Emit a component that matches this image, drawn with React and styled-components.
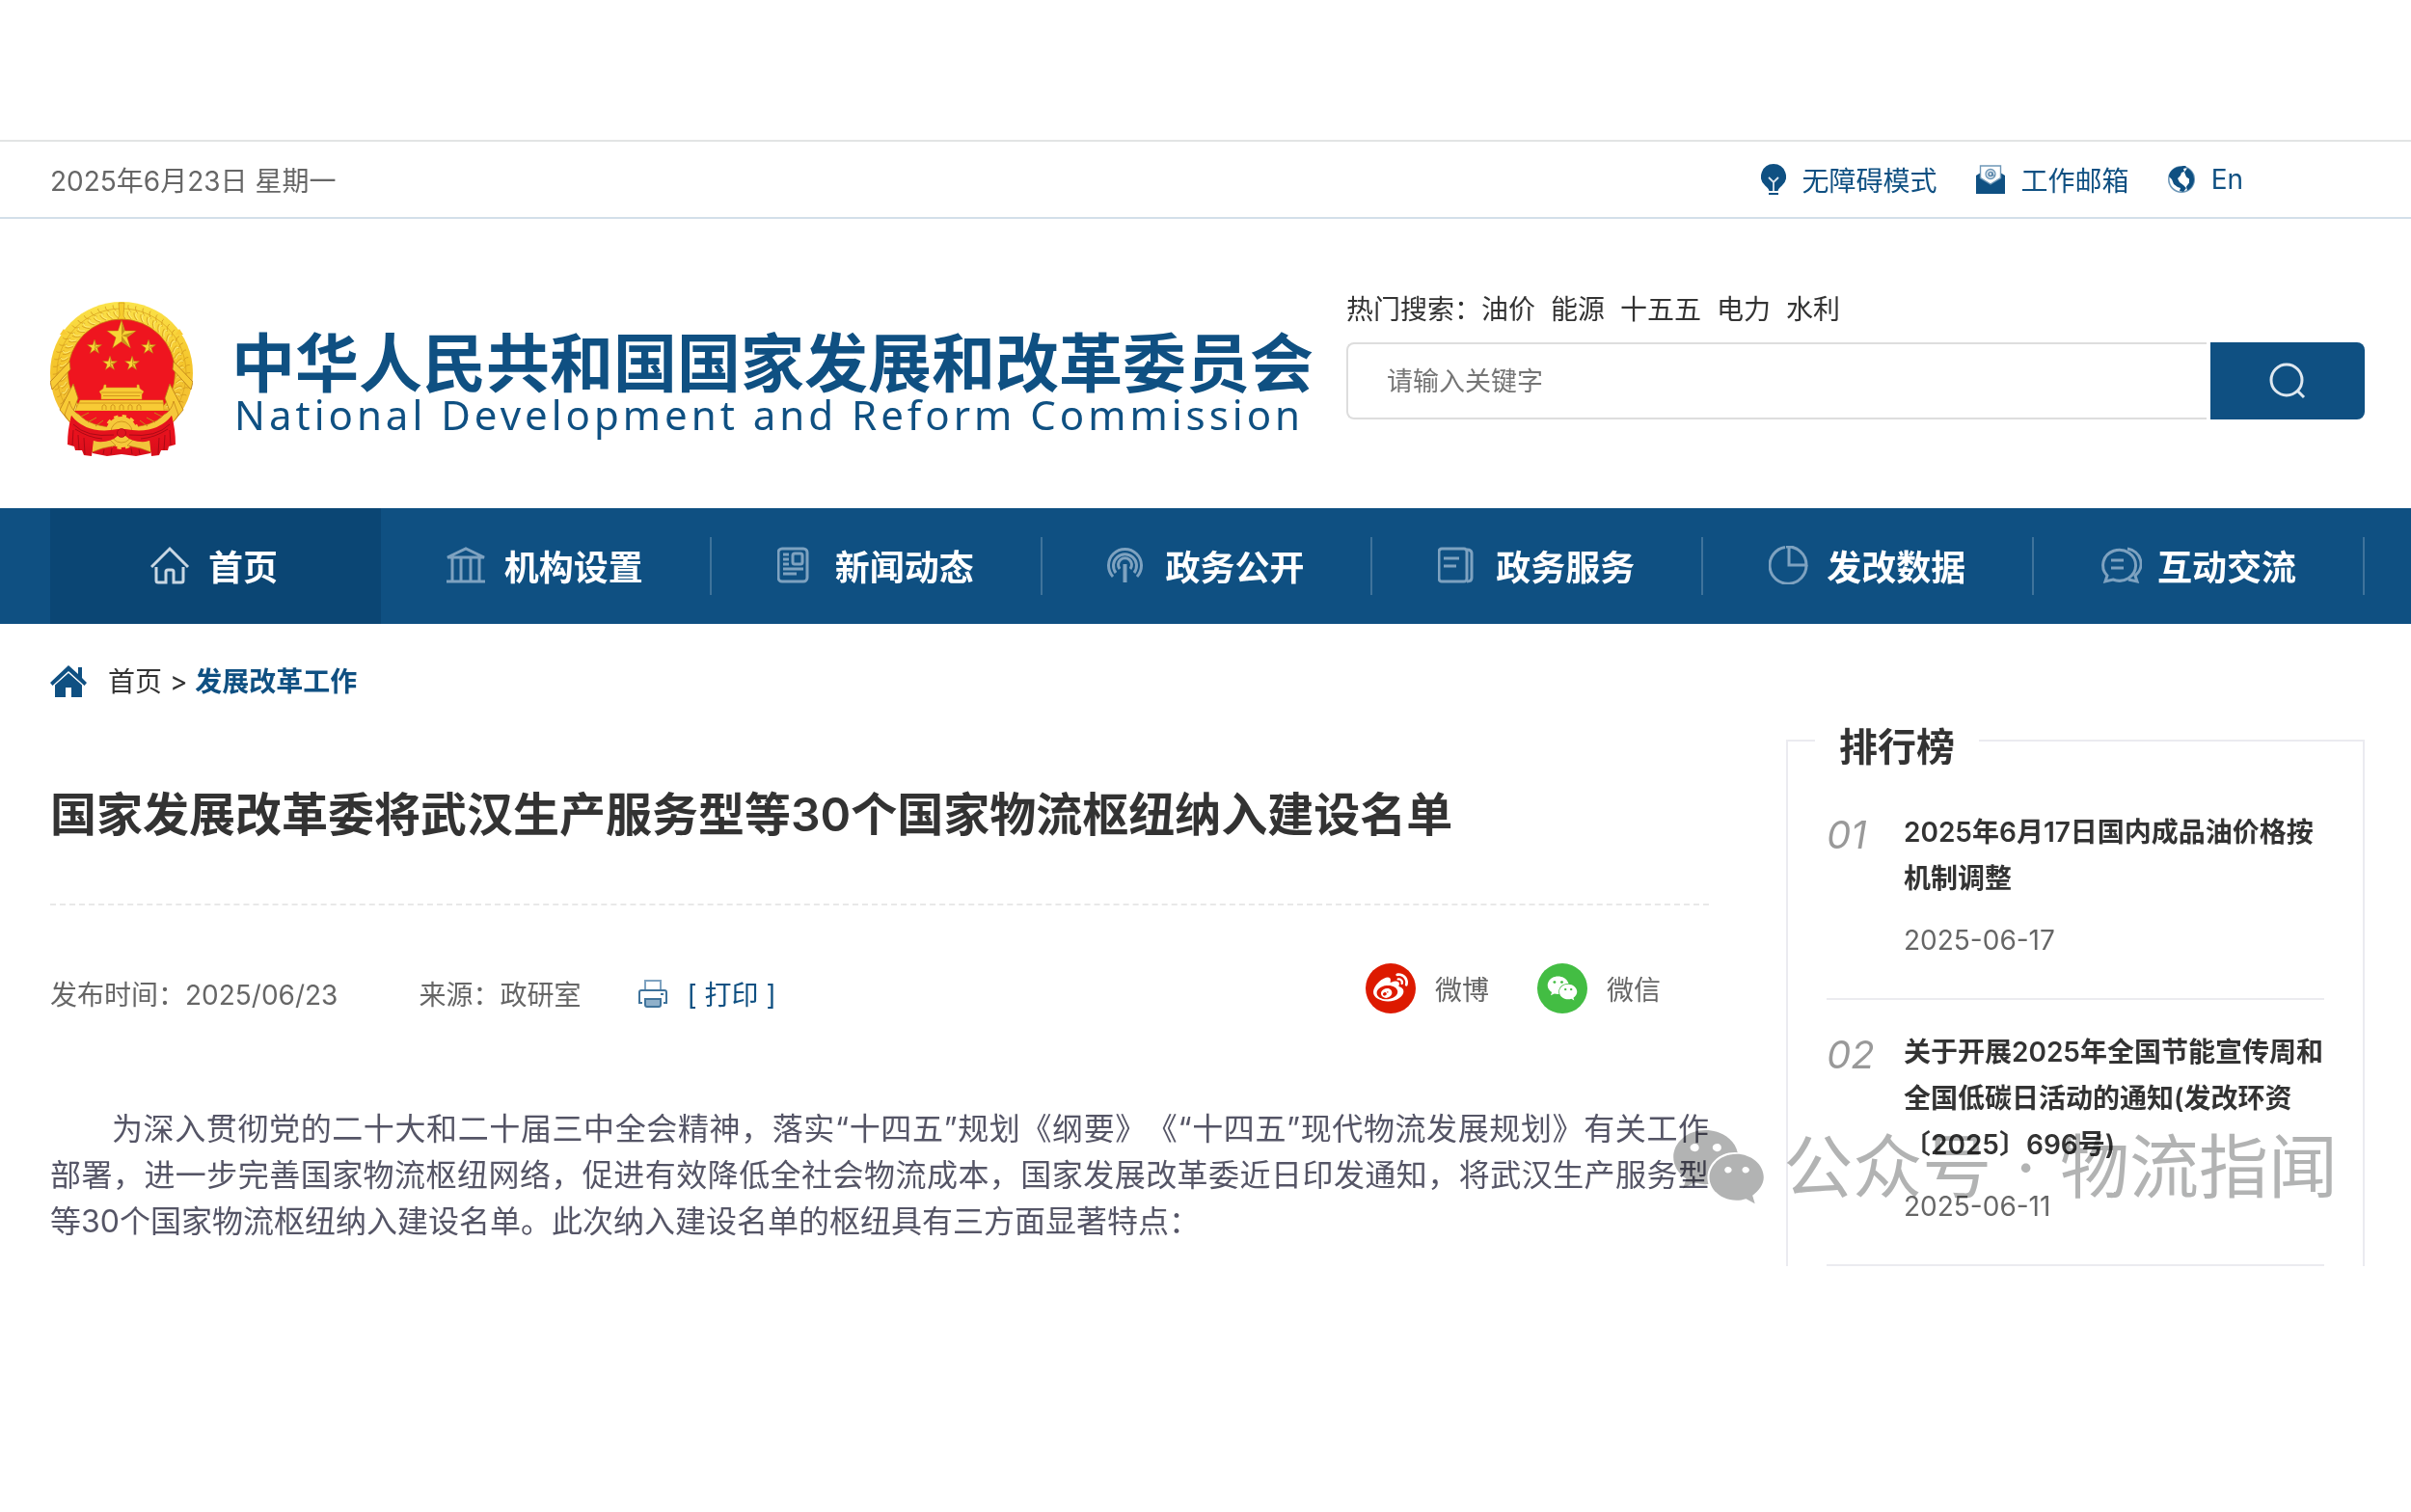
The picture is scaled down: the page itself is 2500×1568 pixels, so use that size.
import React from 'react';
import styled, { createGlobalStyle, ThemeProvider } from 'styled-components';
import { FaWeibo, FaWeixin } from 'react-icons/fa';

const theme = {
  blue: '#0f5082',
  blueDark: '#0b4674',
  ink: '#333333',
  gray: '#666666',
  line: '#ebebf0',
};

const hotWords = ['油价', '能源', '十五五', '电力', '水利'];

const rankList = [
  { no: '01', title: '2025年6月17日国内成品油价格按机制调整', date: '2025-06-17' },
  {
    no: '02',
    title: '关于开展2025年全国节能宣传周和全国低碳日活动的通知(发改环资〔2025〕696号)',
    date: '2025-06-11',
  },
];

const star = (cx, cy, r) =>
  Array.from({ length: 10 }, (_, i) => {
    const rad = i % 2 ? r * 0.39 : r;
    const a = (Math.PI / 5) * i - Math.PI / 2;
    return `${(cx + rad * Math.cos(a)).toFixed(2)},${(cy + rad * Math.sin(a)).toFixed(2)}`;
  }).join(' ');

const wheat = Array.from({ length: 46 }, (_, i) => -235 + i * 6.45);

const Emblem = () => (
  <svg width="148" height="160" viewBox="0 0 148 160" role="img" aria-label="国徽">
    <defs>
      <linearGradient id="gold" x1="0" y1="0" x2="0" y2="1">
        <stop offset="0" stopColor="#fbe34a" />
        <stop offset="0.5" stopColor="#f5c62c" />
        <stop offset="1" stopColor="#f3bf35" />
      </linearGradient>
      <linearGradient id="drape" x1="0" y1="0" x2="0" y2="1">
        <stop offset="0" stopColor="#f5141f" />
        <stop offset="1" stopColor="#d80e1b" />
      </linearGradient>
    </defs>
    <path
      d="M74 0C33 0 0 32 0 74c0 20 8 38 20 51h107c13-13 21-31 21-51C148 32 115 0 74 0z"
      fill="url(#gold)"
    />
    {wheat.map((deg) => (
      <g key={deg} transform={`rotate(${deg} 74 74)`} stroke="#cf951c" strokeWidth="0.7" fill="none">
        <path d="M131 74q4-5 7-5M138 73q4-5 7-4" />
        <path d="M139 72q-3-3-7 3" stroke="#fff08a" />
      </g>
    ))}
    <circle cx="74" cy="74" r="67" fill="none" stroke="#dba51f" strokeWidth="0.8" />
    <circle cx="74" cy="73.500" r="55.500" fill="#ef151f" stroke="#c47a12" strokeWidth="0.8" />
    <path d="M71 1l1 13-2 4h8l-2-4 1-13z" fill="#f7cc2c" stroke="#c98a16" strokeWidth="0.6" />
    <path
      d="M0 83l20-21 1 8L2 91zM148 83l-20-21-1 8 19 21zM10 112l14-27 5 15-9 24zM138 112l-14-27-5 15 9 24z"
      fill="#f8cb35"
      stroke="#b97816"
      strokeWidth="0.8"
    />
    <path d="M10 34l4-6 4 6zM138 34l-4-6-4 6z" fill="#f8cb35" />
    {[
      [74, 35, 16],
      [46, 47, 8],
      [102, 47, 8],
      [62, 64, 8],
      [85, 64, 8],
    ].map(([x, y, r]) => (
      <g key={`${x}-${y}`}>
        <polygon points={star(x, y, r)} fill="#f8d435" stroke="#b9650d" strokeWidth="0.5" />
        <path
          d={`M${x} ${y}v${-r * 0.9}l${r * 0.22} ${r * 0.58}zM${x} ${y}l${r * 0.85} ${-r * 0.27}l${-r * 0.5} ${r * 0.38}zM${x} ${y}l${r * 0.53} ${r * 0.73}l${-r * 0.53} ${-r * 0.33}z`}
          fill="#c8921c"
        />
      </g>
    ))}
    <path
      d="M56 86h2v3h32v-3h2l1 4 4 3-2 3v5H53v-5l-2-3 4-3zM31 102h86l1 11H26z"
      fill="#f8cb35"
      stroke="#d79a1c"
      strokeWidth="0.5"
    />
    <path d="M53 94h42M55 97.500h38M30 105h88" stroke="#c98a16" strokeWidth="0.8" />
    <path d="M54 112v-4q2-3 4 0v4M63 112v-4q2-3 4 0v4M72 112v-4q2-3 4 0v4M81 112v-4q2-3 4 0v4M90 112v-4q2-3 4 0v4" fill="none" stroke="#c98a16" strokeWidth="0.8" />
    <path d="M24 113h100q-14 26-50 26T24 113z" fill="#ef151f" />
    <path
      d="M20 103q2 10 10 14 11 13 44 14 33-1 44-14 8-4 10-14l5 14q-13 24-59 25-46-1-59-25z"
      fill="#f6c83a"
      stroke="#c07c16"
      strokeWidth="0.7"
    />
    <path d="M32 119l8-4M39 125l9-5M47 129l8-6M116 119l-8-4M109 125l-9-5M101 129l-8-6" stroke="#c98a16" />
    <path d="M36 138h76l-8 19-15 3-15-2-15 2-15-3z" fill="url(#drape)" />
    <circle cx="74" cy="135" r="16" fill="#f6c83a" />
    <circle cx="74" cy="135" r="16" fill="none" stroke="#f6c83a" strokeWidth="4" strokeDasharray="4.200 4.200" />
    <circle cx="74" cy="135" r="11" fill="none" stroke="#c98a16" strokeWidth="0.8" />
    <path d="M44 141l18 2 6 6-14 3-11 4zM104 141l-18 2-6 6 14 3 11 4z" fill="#f2c33b" stroke="#b97816" strokeWidth="0.6" />
    <path
      d="M22 118q-4 14-4 30l7 2 1 4h7l2 5 8 1 2-17 4-1q-18-8-27-24zM126 118q4 14 4 30l-7 2-1 4h-7l-2 5-8 1-2-17-4-1q18-8 27-24z"
      fill="url(#drape)"
    />
    <path
      d="M22 118q16 20 48 14h8q32 6 48-14l1 9q-8 14-28 18-14 1-21-6h-8q-7 7-21 6-20-4-28-18z"
      fill="#e4121d"
    />
    <path
      d="M24 127q14 14 42 11M26 132q14 9 28 10M124 127q-14 14-42 11M122 132q-14 9-28 10M24 133l-1 16M29 138l1 16M35 141l1 17M124 133l1 16M119 138l-1 16M113 141l-1 17M56 153l-1 5M64 152l-1 6M84 152l1 6M92 153l1 5"
      fill="none"
      stroke="#9c0713"
      strokeWidth="0.8"
    />
    <circle cx="74" cy="136" r="4.500" fill="#e01520" stroke="#9c0713" strokeWidth="0.6" />
  </svg>
);

const BulbIcon = () => (
  <svg width="26" height="32" viewBox="0 0 26 32">
    <path d="M13 0a13 13 0 0 0-8.500 22.800C6.500 24.500 8 26 8.500 28h9c.5-2 2-3.500 4-5.200A13 13 0 0 0 13 0z" fill="#0f5082" />
    <path d="M8 14l5 5 5-5M13 19v9" fill="none" stroke="#dfe8f0" strokeWidth="1.800" />
    <path d="M8 31h10" stroke="#0f5082" strokeWidth="2" />
  </svg>
);

const MailIcon = () => (
  <svg width="30" height="30" viewBox="0 0 30 30">
    <path d="M0 11l5-3h20l5 3v19H0z" fill="#0f5082" />
    <path d="M4.500 1h21v12.500L15 20 4.500 13.500z" fill="#fff" stroke="#6f98b8" strokeWidth="1.400" />
    <circle cx="15" cy="9.500" r="5" fill="#d5e0ea" stroke="#6f98b8" strokeWidth="1.300" />
    <circle cx="15" cy="9.500" r="2" fill="none" stroke="#47789f" strokeWidth="1.200" />
    <path d="M17 7.500v3q1 1.500 2.500 0" fill="none" stroke="#47789f" />
  </svg>
);

const GlobeIcon = () => (
  <svg width="28" height="28" viewBox="0 0 28 28">
    <circle cx="14" cy="14" r="13.200" fill="#fff" stroke="#6f98b8" strokeWidth="1.600" />
    <path d="M14 .7C7 .7 1.500 5 1 11l3 3 2 5 4 3 3 1-1 3 4 1 3-4-3-3-4-3-2-4 3-3 1-3 3-1-1-3 3-1-1-3z" fill="#0f5082" />
    <path d="M20 2.500l-3 4 2 5 3 2v4l-3 4 1 4c4-2 7-6 7-11.500 0-5-2.500-9.500-7-11.500z" fill="#0f5082" />
  </svg>
);

const SearchIcon = () => (
  <svg width="38" height="38" viewBox="0 0 38 38" fill="none" stroke="#dfe8f0" strokeWidth="3">
    <circle cx="18" cy="18" r="16" />
    <path d="M29 29l7 7" />
  </svg>
);

const HomeFilledIcon = () => (
  <svg width="38" height="34" viewBox="0 0 38 34" fill="#0f5082">
    <path d="M19 0L0 18l2.500 3L19 6l16.500 15 2.500-3-5-5V2h-4v7z" />
    <path d="M19 8L5 20.500V33h11V23h6v10h11V20.500z" />
  </svg>
);

const PrinterIcon = () => (
  <svg width="30" height="30" viewBox="0 0 30 30" fill="none" stroke="#3f739b" strokeWidth="2">
    <path d="M7 12V2h16v10" stroke="#7ea2c0" />
    <path d="M4 25H1V14q0-2 2-2h24q2 0 2 2v11h-3" />
    <path d="M7 21h16v6q0 2-2 2H9q-2 0-2-2z" fill="#8fb0ca" />
    <path d="M23 16h3" />
  </svg>
);

const navItems = [
  {
    name: '首页',
    active: true,
    icon: (
      <>
        <path d="M1 22L20 3l19 19" />
        <path d="M6 22v14q0 2 2 2h8V27q0-2 2-2h4q2 0 2 2v11h8q2 0 2-2V22" />
      </>
    ),
  },
  {
    name: '机构设置',
    icon: (
      <>
        <path d="M1 12L20 3l19 9zM0 37h40" />
        <path d="M6 13v24M15 13v24M25 13v24M34 13v24" />
      </>
    ),
  },
  {
    name: '新闻动态',
    icon: (
      <>
        <rect x="1" y="3" width="30" height="34" rx="4" />
        <rect x="16" y="8" width="10" height="11" rx="2" />
        <path d="M6 9h6M6 14h6M6 19h6M6 24h21M6 29h14" />
      </>
    ),
  },
  {
    name: '政务公开',
    icon: (
      <>
        <path d="M6 32a17 17 0 1 1 25 0" />
        <path d="M9 28a12 12 0 1 1 19 0" />
        <path d="M13 24a7 7 0 1 1 11 0" />
        <path d="M18.500 19v19" strokeWidth="4" />
      </>
    ),
  },
  {
    name: '政务服务',
    icon: (
      <>
        <rect x="1" y="3" width="29" height="34" rx="3" />
        <path d="M30 4q5 0 5 4v25q0 4-5 4M6 13h16M6 21h13" />
      </>
    ),
  },
  {
    name: '发改数据',
    icon: (
      <>
        <path d="M17 1.500A19 19 0 1 0 39 20" />
        <path d="M18 1h3v19h18A19 19 0 0 0 18 1z" />
      </>
    ),
  },
  {
    name: '互动交流',
    icon: (
      <>
        <path d="M6 37l2-6a17 16 0 1 1 6 4z" />
        <path d="M29 3a17 16 0 0 1 8 28l2 6-9-2M12 15h13M12 23h13" />
      </>
    ),
  },
];

const App = () => (
  <ThemeProvider theme={theme}>
    <GlobalStyle />
    <Page>
      <TopBar>
        <span>2025年6月23日 星期一</span>
        <TopLinks>
          <TopLink href="#barrier-free">
            <BulbIcon />
            无障碍模式
          </TopLink>
          <TopLink href="#mail">
            <MailIcon />
            工作邮箱
          </TopLink>
          <TopLink href="#en">
            <GlobeIcon />
            En
          </TopLink>
        </TopLinks>
      </TopBar>

      <Header>
        <Brand href="#home">
          <Emblem />
          <BrandText>
            <BrandName>中华人民共和国国家发展和改革委员会</BrandName>
            <BrandSub>National Development and Reform Commission</BrandSub>
          </BrandText>
        </Brand>
        <SearchArea>
          <HotWords>
            <span>热门搜索：</span>
            <HotLinks>
              {hotWords.map((word) => (
                <a key={word} href={`#${word}`}>
                  {word}
                </a>
              ))}
            </HotLinks>
          </HotWords>
          <SearchForm onSubmit={(e) => e.preventDefault()}>
            <SearchInput type="text" placeholder="请输入关键字" aria-label="请输入关键字" />
            <SearchBtn type="submit" aria-label="搜索">
              <SearchIcon />
            </SearchBtn>
          </SearchForm>
        </SearchArea>
      </Header>

      <Nav>
        {navItems.map((item) => (
          <NavItem key={item.name} href={`#${item.name}`} $active={item.active}>
            <NavIcon viewBox="0 0 44 40" $active={item.active}>
              {item.icon}
            </NavIcon>
            {item.name}
          </NavItem>
        ))}
      </Nav>

      <Content>
        <Article>
          <Crumbs>
            <HomeFilledIcon />
            <p>
              <a href="#home">首页</a> &gt; <CrumbCurrent href="#work">发展改革工作</CrumbCurrent>
            </p>
          </Crumbs>
          <Title>国家发展改革委将武汉生产服务型等30个国家物流枢纽纳入建设名单</Title>
          <Meta>
            <MetaInfo>
              <Published>发布时间：2025/06/23</Published>
              <Source>来源：政研室</Source>
              <PrintBtn type="button">
                <PrinterIcon />[ 打印 ]
              </PrintBtn>
            </MetaInfo>
            <Share>
              <ShareLink href="#weibo">
                <ShareBadge $bg="#dd1a00">
                  <FaWeibo size={36} />
                </ShareBadge>
                微博
              </ShareLink>
              <ShareLink href="#weixin">
                <ShareBadge $bg="#43bd43">
                  <FaWeixin size={32} />
                </ShareBadge>
                微信
              </ShareLink>
            </Share>
          </Meta>
          <Body>
            为深入贯彻党的二十大和二十届三中全会精神，落实“十四五”规划《纲要》《“十四五”现代物流发展规划》有关工作部署，进一步完善国家物流枢纽网络，促进有效降低全社会物流成本，国家发展改革委近日印发通知，将武汉生产服务型等30个国家物流枢纽纳入建设名单。此次纳入建设名单的枢纽具有三方面显著特点：
          </Body>
        </Article>

        <Rank>
          <RankTitle>排行榜</RankTitle>
          <RankList>
            {rankList.map((item) => (
              <RankItem key={item.no}>
                <RankNo>{item.no}</RankNo>
                <div>
                  <RankLink href={`#rank-${item.no}`}>{item.title}</RankLink>
                  <RankDate>{item.date}</RankDate>
                </div>
              </RankItem>
            ))}
          </RankList>
        </Rank>

        <Watermark>
          <FaWeixin size={98} />
          <WatermarkText>
            <span>公众号</span>
            <span>·</span>
            <span>物流指闻</span>
          </WatermarkText>
        </Watermark>
      </Content>
    </Page>
  </ThemeProvider>
);

const GlobalStyle = createGlobalStyle`
  * {
    box-sizing: border-box;
    margin: 0;
    padding: 0;
  }

  body {
    background: #fff;
    color: ${theme.ink};
    font-family: Inter, 'Noto Sans CJK SC', sans-serif;
    font-size: 28px;
    text-spacing-trim: space-all;
  }

  a {
    color: inherit;
    text-decoration: none;
  }

  svg {
    display: block;
    flex: none;
  }
`;

const Page = styled.div`
  padding-top: 145px;
`;

const TopBar = styled.div`
  display: flex;
  align-items: center;
  justify-content: space-between;
  height: 82px;
  padding: 0 174px 0 52px;
  border-top: 2px solid #e2e4e4;
  border-bottom: 2px solid #d3dfe9;
  color: ${({ theme }) => theme.gray};
`;

const TopLinks = styled.div`
  display: flex;
  gap: 40px;
`;

const TopLink = styled.a`
  display: flex;
  align-items: center;
  gap: 17px;
  color: ${({ theme }) => theme.blue};
`;

const Header = styled.header`
  display: flex;
  align-items: flex-start;
  justify-content: space-between;
  height: 300px;
  padding: 74px 48px 0 52px;
`;

const Brand = styled.a`
  display: flex;
  gap: 40px;
  padding-top: 12px;
  color: ${({ theme }) => theme.blue};
`;

const BrandText = styled.div`
  padding-top: 30px;
  white-space: nowrap;
`;

const BrandName = styled.h1`
  font-size: 66px;
  line-height: 68px;
  font-weight: 700;
`;

const BrandSub = styled.p`
  padding-left: 3px;
  font-family: 'Noto Sans', sans-serif;
  font-size: 42px;
  line-height: 38px;
  letter-spacing: 4px;
`;

const SearchArea = styled.div`
  width: 44%;
`;

const HotWords = styled.div`
  display: flex;
  height: 54px;
  line-height: 40px;
`;

const HotLinks = styled.div`
  display: flex;
  gap: 16px;
`;

const SearchForm = styled.form`
  display: flex;
  gap: 4px;
  height: 80px;
`;

const SearchInput = styled.input`
  flex: 1;
  min-width: 0;
  padding: 0 40px;
  border: 2px solid #dddddd;
  border-right: 0;
  border-radius: 8px 0 0 8px;
  font-family: inherit;
  font-size: 27px;

  &::placeholder {
    color: #757575;
  }
`;

const SearchBtn = styled.button`
  display: grid;
  place-items: center;
  width: 160px;
  border: 0;
  border-radius: 0 8px 8px 0;
  background: ${({ theme }) => theme.blue};
  cursor: pointer;
`;

const Nav = styled.nav`
  display: grid;
  grid-template-columns: repeat(7, 1fr);
  height: 120px;
  padding: 0 48px 0 52px;
  background: ${({ theme }) => theme.blue};
`;

const NavItem = styled.a`
  display: flex;
  align-items: center;
  justify-content: center;
  gap: 16px;
  padding: 0 3px 3px 0;
  color: #fff;
  font-size: 36px;
  font-weight: 700;
  background: ${({ theme, $active }) =>
    $active
      ? theme.blueDark
      : 'linear-gradient(#3f739b, #3f739b) right center / 2px 60px no-repeat'};
`;

const NavIcon = styled.svg`
  width: 44px;
  height: 40px;
  fill: none;
  stroke: ${({ $active }) => ($active ? '#c9d7e3' : '#7ea2c0')};
  stroke-width: 3px;
`;

const Content = styled.div`
  position: relative;
  display: grid;
  grid-template-columns: minmax(0, 1fr) 600px;
  gap: 80px;
  padding: 0 48px 0 52px;
`;

const Article = styled.main`
  padding-top: 36px;
`;

const Crumbs = styled.div`
  display: flex;
  align-items: center;
  gap: 22px;
  line-height: 48px;
`;

const CrumbCurrent = styled.a`
  color: ${({ theme }) => theme.blue};
  font-weight: 700;
`;

const Title = styled.h2`
  padding: 82px 0 60px;
  border-bottom: 2px dashed #e8e8e8;
  font-size: 48px;
  line-height: 64px;
  font-weight: 600;
`;

const Meta = styled.div`
  display: flex;
  justify-content: space-between;
  padding: 60px 50px 0 0;
  color: ${({ theme }) => theme.gray};
`;

const MetaInfo = styled.div`
  display: flex;
  align-items: center;
  padding-top: 10px;
`;

const Published = styled.span`
  margin-right: 84px;
`;

const Source = styled.span`
  margin-right: 60px;
`;

const PrintBtn = styled.button`
  display: flex;
  align-items: center;
  gap: 20px;
  border: 0;
  background: none;
  color: ${({ theme }) => theme.blue};
  font: inherit;
  cursor: pointer;
`;

const Share = styled.div`
  display: flex;
  gap: 50px;
`;

const ShareLink = styled.a`
  display: flex;
  align-items: center;
  gap: 20px;
`;

const ShareBadge = styled.span`
  display: grid;
  place-items: center;
  width: 52px;
  height: 52px;
  border-radius: 50%;
  background: ${({ $bg }) => $bg};
  color: #fff;
`;

const Body = styled.p`
  margin-top: 96px;
  color: #555566;
  font-size: 32px;
  line-height: 48px;
  text-align: justify;
  text-indent: 2em;
`;

const Rank = styled.aside`
  margin-top: 120px;
  border: 2px solid ${({ theme }) => theme.line};
  border-bottom: 0;
`;

const RankTitle = styled.h3`
  width: fit-content;
  margin: -18px 0 10px 28px;
  padding: 0 25px;
  background: #fff;
  font-size: 40px;
  line-height: 48px;
  font-weight: 600;
`;

const RankList = styled.ol`
  padding: 0 40px;
  list-style: none;
`;

const RankItem = styled.li`
  display: grid;
  grid-template-columns: 80px 1fr;
  padding: 30px 0 36px;
  border-bottom: 2px solid ${({ theme }) => theme.line};
  line-height: 48px;
`;

const RankNo = styled.span`
  color: #999999;
  font-size: 40px;
  font-style: italic;
  line-height: 54px;
`;

const RankLink = styled.a`
  display: block;
  font-weight: 600;
`;

const RankDate = styled.p`
  margin-top: 16px;
  color: ${({ theme }) => theme.gray};
`;

const Watermark = styled.div`
  position: absolute;
  right: 76px;
  bottom: 54px;
  display: flex;
  align-items: center;
  gap: 18px;
  color: #b2b3b3;
  mix-blend-mode: multiply;
  pointer-events: none;
`;

const WatermarkText = styled.div`
  display: flex;
  gap: 25px;
  font-size: 72px;
  line-height: 96px;
`;

export default App;
